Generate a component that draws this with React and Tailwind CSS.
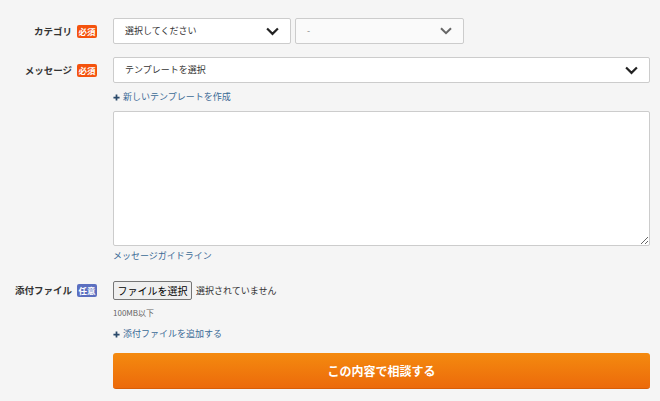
import { useState } from "react";

/* ================== UI ================== */
function Badge({ children, className = "" }) {
  return (
    <span
      className={`inline-flex items-center justify-center w-[20px] h-[13px] rounded-[2px] text-white text-[8.5px] font-bold leading-none ${className}`}
    >
      {children}
    </span>
  );
}

function Label({ children, badge, className = "h-[26px]" }) {
  return (
    <div className={`w-[97px] shrink-0 flex items-center justify-end gap-[5px] ${className}`}>
      <span className="text-[9.5px] font-bold text-[#333]">{children}</span>
      {badge}
    </div>
  );
}

function Chevron({ className = "" }) {
  return (
    <svg viewBox="0 0 12 8" className={className} fill="none">
      <path d="M1 1.2 6 6.2 11 1.2" stroke="currentColor" strokeWidth="2" />
    </svg>
  );
}

function SelectBox({ children, className = "", chevron = "" }) {
  return (
    <div
      className={`flex items-center justify-between h-[26px] border border-[#ccc] rounded-[2px] pl-[11px] pr-[11px] ${className}`}
    >
      <span className="text-[9px]">{children}</span>
      <Chevron className={chevron} />
    </div>
  );
}

function Plus() {
  return (
    <svg viewBox="0 0 8 8" className="w-[7px] h-[7px] text-[#2b4a6b]">
      <path d="M4 0.5v7M0.5 4h7" stroke="currentColor" strokeWidth="2" />
    </svg>
  );
}

/* ================== APP ================== */
export default function App() {
  const [msg, setMsg] = useState("");

  return (
    <div
      className="w-[660px] h-[401px] bg-[#f5f5f5] overflow-hidden pt-[18px]"
      style={{ fontFamily: '"Noto Sans CJK JP", "Noto Sans", sans-serif' }}
    >
      {/* カテゴリ */}
      <div className="flex items-start">
        <Label badge={<Badge className="bg-[#f4520d]">必須</Badge>}>カテゴリ</Label>
        <div className="ml-4 flex gap-[4px]">
          <SelectBox
            className="w-[178px] bg-white text-[#333]"
            chevron="w-[13px] h-[9px] text-[#222]"
          >
            選択してください
          </SelectBox>
          <SelectBox
            className="w-[169px] bg-[#fafafa] text-[#888]"
            chevron="w-[12px] h-[8px] text-[#666]"
          >
            -
          </SelectBox>
        </div>
      </div>

      {/* メッセージ */}
      <div className="flex items-start mt-[13px]">
        <Label badge={<Badge className="bg-[#f4520d]">必須</Badge>}>メッセージ</Label>
        <div className="ml-4 w-[537px]">
          <SelectBox
            className="w-full bg-white text-[#333]"
            chevron="w-[13px] h-[9px] text-[#222]"
          >
            テンプレートを選択
          </SelectBox>
          <div className="flex items-center gap-[3px] mt-[8px] h-[12px] text-[9px] text-[#3a6a96]">
            <Plus />
            新しいテンプレートを作成
          </div>
          <textarea
            value={msg}
            onChange={(e) => setMsg(e.target.value)}
            className="block w-full h-[135px] mt-[8px] bg-white border border-[#ccc] rounded-[2px] outline-none"
          />
          <div className="mt-[3px] text-[9px] text-[#3a6a96] leading-[14px]">
            メッセージガイドライン
          </div>
        </div>
      </div>

      {/* 添付ファイル */}
      <div className="flex items-start mt-[18px]">
        <Label
          className="h-[19px]"
          badge={<Badge className="bg-[#5b6fc0]">任意</Badge>}
        >
          添付ファイル
        </Label>
        <div className="ml-4 w-[537px]">
          <div className="flex items-center gap-[4px]">
            <button className="h-[19px] w-[79px] bg-[#efefef] border border-[#767676] rounded-[2px] text-[10px] text-black leading-none">
              ファイルを選択
            </button>
            <span className="text-[9px] text-[#333]">選択されていません</span>
          </div>
          <div className="mt-[7px] text-[8px] text-[#666] leading-[12px]">100MB以下</div>
          <div className="flex items-center gap-[3px] mt-[9px] h-[12px] text-[9px] text-[#3a6a96]">
            <Plus />
            添付ファイルを追加する
          </div>
          <button className="mt-[13px] w-full h-[36px] rounded-[3px] border-b border-[#d85e08] bg-gradient-to-b from-[#f48a0f] to-[#ec6a0b] text-white text-[12px] font-bold">
            この内容で相談する
          </button>
        </div>
      </div>
    </div>
  );
}
